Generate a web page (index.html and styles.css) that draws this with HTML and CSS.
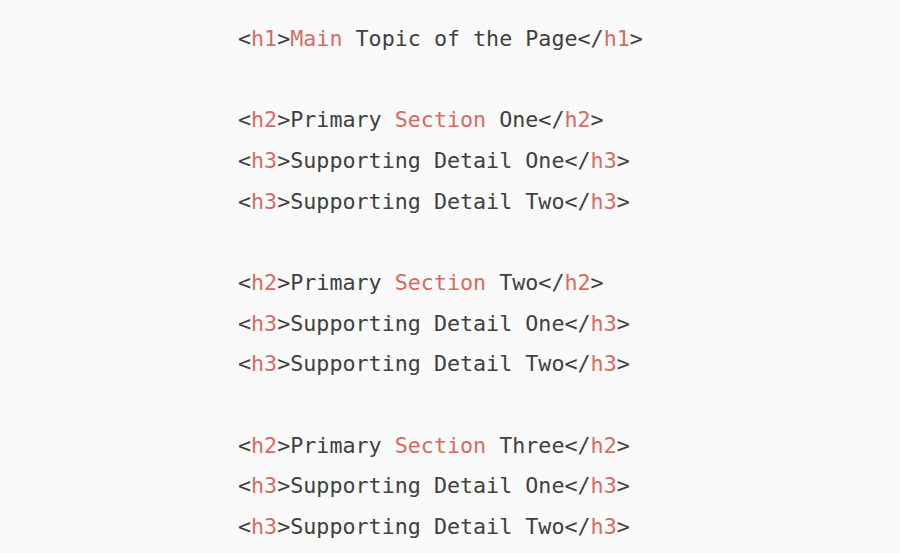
FILE: index.html
```html
<!DOCTYPE html>
<html lang="en">
<head>
<meta charset="utf-8">
<title>Heading structure</title>
<link rel="stylesheet" href="styles.css">
</head>
<body>
<main class="page">
<pre class="code"><span class="tag">&lt;<span class="hl">h1</span>&gt;</span><span class="hl">Main</span> Topic of the Page<span class="tag">&lt;/<span class="hl">h1</span>&gt;</span>

<span class="tag">&lt;<span class="hl">h2</span>&gt;</span>Primary <span class="hl">Section</span> One<span class="tag">&lt;/<span class="hl">h2</span>&gt;</span>
<span class="tag">&lt;<span class="hl">h3</span>&gt;</span>Supporting Detail One<span class="tag">&lt;/<span class="hl">h3</span>&gt;</span>
<span class="tag">&lt;<span class="hl">h3</span>&gt;</span>Supporting Detail Two<span class="tag">&lt;/<span class="hl">h3</span>&gt;</span>

<span class="tag">&lt;<span class="hl">h2</span>&gt;</span>Primary <span class="hl">Section</span> Two<span class="tag">&lt;/<span class="hl">h2</span>&gt;</span>
<span class="tag">&lt;<span class="hl">h3</span>&gt;</span>Supporting Detail One<span class="tag">&lt;/<span class="hl">h3</span>&gt;</span>
<span class="tag">&lt;<span class="hl">h3</span>&gt;</span>Supporting Detail Two<span class="tag">&lt;/<span class="hl">h3</span>&gt;</span>

<span class="tag">&lt;<span class="hl">h2</span>&gt;</span>Primary <span class="hl">Section</span> Three<span class="tag">&lt;/<span class="hl">h2</span>&gt;</span>
<span class="tag">&lt;<span class="hl">h3</span>&gt;</span>Supporting Detail One<span class="tag">&lt;/<span class="hl">h3</span>&gt;</span>
<span class="tag">&lt;<span class="hl">h3</span>&gt;</span>Supporting Detail Two<span class="tag">&lt;/<span class="hl">h3</span>&gt;</span></pre>
</main>
</body>
</html>
```

FILE: styles.css
```css
html, body {
  margin: 0;
  padding: 0;
  background: #fafafa;
}

.page {
  padding: 19px 0 0 238px;
}

.code {
  margin: 0;
  font-family: "DejaVu Sans Mono", "Liberation Mono", monospace;
  font-size: 21.7px;
  line-height: 40.67px;
  color: #404040;
}

.hl {
  color: #da6a60;
}
```
